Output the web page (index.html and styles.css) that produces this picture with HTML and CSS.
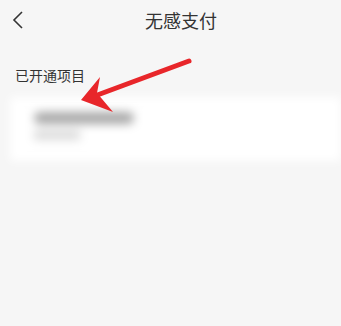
FILE: index.html
```html
<!DOCTYPE html>
<html>
<head>
	<meta charset="UTF-8">
	<title>无感支付</title>
	<link rel="stylesheet" href="styles.css">
</head>
<body>
<div class="topbar">
	<svg class="back" width="12" height="18" viewBox="0 0 12 18"><path d="M10 1 L2 9 L10 17" fill="none" stroke="#333" stroke-width="1.6"/></svg>
	<div class="title">无感支付</div>
</div>
<div class="section">已开通项目</div>
<div class="card">
	<div class="blur1"></div>
	<div class="blur2"></div>
</div>
<svg class="arrow" width="341" height="130" viewBox="0 0 341 130">
	<line x1="189" y1="61" x2="92" y2="97" stroke="#e8262a" stroke-width="5" stroke-linecap="round"/>
	<polygon points="81,100 100,77 97,93 113,112" fill="#e8262a"/>
</svg>
</body>
</html>
```

FILE: styles.css
```css
body {
	margin: 0;
	background-color: #f6f6f6;
	font-family: "Noto Sans CJK SC", "Noto Sans", sans-serif;
	color: #333;
	position: relative;
	height: 326px;
	overflow: hidden;
}
.topbar {
	height: 40px;
	display: flex;
	align-items: center;
	position: relative;
}
.back {
	margin-left: 12px;
}
.title {
	position: absolute;
	left: 0;
	right: 0;
	text-align: center;
	padding-left: 21px;
	font-size: 18px;
	line-height: 40px;
}
.section {
	margin-top: 25px;
	padding-left: 15px;
	font-size: 14px;
	line-height: 20px;
}
.card {
	margin: 12px 0 0 10px;
	height: 64px;
	background: #fff;
	padding: 15px 0 0 24px;
	box-sizing: border-box;
	filter: blur(5px);
}
.blur1 {
	width: 100px;
	height: 12px;
	background: #a8a8a8;
	border-radius: 6px;
}
.blur2 {
	margin-top: 6px;
	width: 46px;
	height: 10px;
	background: #dcdcdc;
}
.arrow {
	position: absolute;
	left: 0;
	top: 0;
}
```
